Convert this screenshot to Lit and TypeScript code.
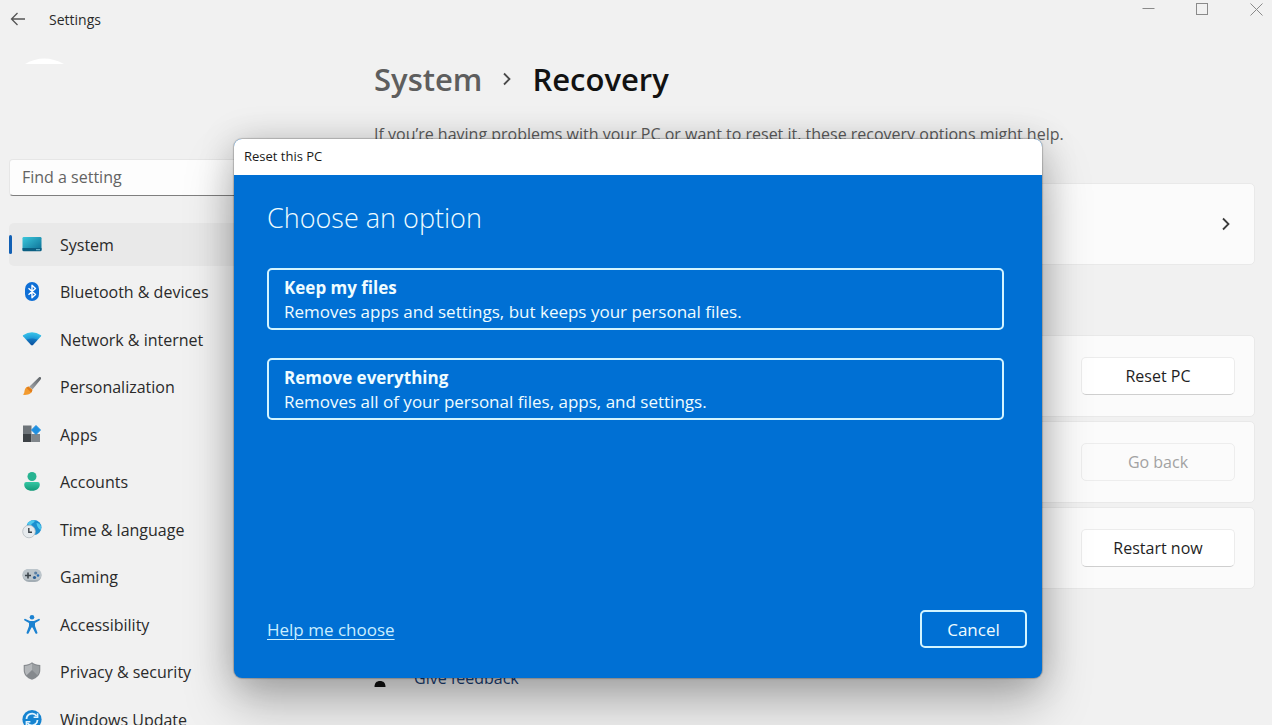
import { LitElement, html, css, svg } from "lit";
import { customElement } from "lit/decorators.js";

const icons: Record<string, unknown> = {
  system: svg`
    <defs><linearGradient id="sy" x1="0" y1="0" x2="1" y2="1"><stop offset="0" stop-color="#3cc8dc"/><stop offset="1" stop-color="#0a6c93"/></linearGradient></defs>
    <rect x="0.5" y="2" width="19" height="14" rx="1.2" fill="url(#sy)"/>
    <path d="M0.5 13h19v2a1.200 1.200 0 0 1-1.200 1.200h-16.600a1.200 1.200 0 0 1-1.200-1.200z" fill="#0b5f82"/>
    <path d="M14 14.700h4" stroke="#8fd3e6" stroke-width="0.800"/>`,
  bluetooth: svg`
    <rect x="3" y="0" width="14" height="19" rx="7" fill="#0f6fd6"/>
    <path d="M6.500 6.300l7 6.200-3.500 3.200V3.300l3.500 3.200-7 6.200" fill="none" stroke="#fff" stroke-width="1.400" stroke-linejoin="round"/>`,
  network: svg`
    <defs><radialGradient id="nw" cx="0.5" cy="1" r="1"><stop offset="0" stop-color="#0b4f9c"/><stop offset="0.5" stop-color="#1377c0"/><stop offset="0.550" stop-color="#1f9ad8"/><stop offset="1" stop-color="#3cc6ea"/></radialGradient></defs>
    <path d="M1 5.300Q10 -1 19 5.300Q19.400 5.800 19 6.300L11 15Q10 15.900 9 15L1 6.300Q0.600 5.800 1 5.300z" fill="url(#nw)"/>`,
  personalization: svg`
    <defs><linearGradient id="pe" x1="1" y1="0" x2="0" y2="1"><stop offset="0" stop-color="#5c6166"/><stop offset="1" stop-color="#a5a9ad"/></linearGradient></defs>
    <path d="M18.600 0.200c0.700 0.500 0.500 1.500 0 2.200L10.500 12.500 7.200 9.700 16.800 0.400c0.600-0.500 1.300-0.600 1.800-0.200z" fill="url(#pe)"/>
    <path d="M6.800 9.600l3.500 3c0.300 3.300-3.300 5.900-9.600 5.200 2.200-1.300 1.300-3.300 2.400-5.700 0.800-1.700 2.300-2.600 3.700-2.500z" fill="#f29a2e"/>
    <path d="M6.200 9.700l4.100 3.400c-0.100 1-0.500 1.800-1.100 2.500L4.300 10.700z" fill="#e07c1c"/>`,
  apps: svg`
    <rect x="1" y="0.500" width="8.500" height="8.500" fill="#6e7479"/>
    <rect x="1" y="9" width="8.500" height="8" fill="#3d4246"/>
    <rect x="9.500" y="9" width="8.500" height="8" fill="#80868b"/>
    <path d="M14 0.500l4.500 4.500-4.500 4.500-4.500-4.500z" fill="#1f8fe0" stroke="#1f8fe0" stroke-linejoin="round"/>`,
  accounts: svg`
    <defs><linearGradient id="ac" x1="0" y1="0" x2="0" y2="1"><stop offset="0" stop-color="#36c7a4"/><stop offset="1" stop-color="#139a78"/></linearGradient></defs>
    <circle cx="10" cy="4.500" r="4.500" fill="#27b391"/>
    <path d="M4.400 10h11.200a2.200 2.200 0 0 1 2.200 2.200c0 4-3 6.500-7.800 6.500s-7.800-2.500-7.800-6.500a2.200 2.200 0 0 1 2.200-2.200z" fill="url(#ac)"/>`,
  time: svg`
    <circle cx="12" cy="7.500" r="7.500" fill="#1c8fd0"/>
    <path d="M5 4a8 8 0 0 1 8-3.500c-1 3-3.500 2.500-4 5zM14.500 3c2 0 3.500 1.200 4.400 3v4c-1.900-0.500-4-3-4.400-7z" fill="#4fc9ee"/>
    <circle cx="7" cy="11.500" r="6.300" fill="#e6eaed" stroke="#b5bcc2" stroke-width="0.800"/>
    <path d="M6.800 8v4.200h3.200" fill="none" stroke="#3a4147" stroke-width="1.400"/>`,
  gaming: svg`
    <rect x="0.500" y="2" width="19" height="13" rx="6.500" fill="#a3adb4"/>
    <rect x="0.500" y="2" width="19" height="11" rx="5.500" fill="#bcc5cb"/>
    <path d="M6 5.500v6M3 8.500h6" stroke="#3c454c" stroke-width="1.600"/>
    <circle cx="13.700" cy="6" r="1.600" fill="#5a7fa3"/><circle cx="16" cy="8.500" r="1.300" fill="#2a6fb5"/><circle cx="12.500" cy="10.500" r="1.600" fill="#2c5f93"/>`,
  accessibility: svg`
    <circle cx="10" cy="2.300" r="2.300" fill="#1b82d1"/>
    <path d="M3.400 3.900L8 5.900h4l4.600-2c1.200-0.400 1.800 1.100 0.800 1.700L13 8v3l2.400 6.400c0.400 1.400-1.400 2-2 0.800L10.500 12.500h-1l-2.900 5.700c-0.600 1.200-2.400 0.600-2-0.800L7 11V8L2.600 5.600c-1-0.600-0.400-2.100 0.800-1.700z" fill="#1b82d1"/>`,
  privacy: svg`
    <path d="M10 0.200c2.400 1.800 5 2.600 8.300 2.700v5.100c0 4.600-3 8-8.300 9.800-5.300-1.800-8.300-5.200-8.300-9.800V2.900C5 2.800 7.600 2 10 0.200z" fill="#85898d"/>
    <path d="M10 1.600c-2.200 1.500-4.400 2.200-7.200 2.400V8c0 2 0.600 3.800 1.800 5.200L10 8z" fill="#b4b7ba"/>
    <path d="M10 1.600c2.200 1.500 4.400 2.200 7.200 2.400V8c0 2-0.600 3.800-1.800 5.200L10 8z" fill="#9b9fa2"/>`,
  update: svg`
    <circle cx="10" cy="9.600" r="9.600" fill="#1583d0"/>
    <path d="M4.500 9A5.600 5.600 0 0 1 14.600 6M15.500 10A5.600 5.600 0 0 1 5.400 13" fill="none" stroke="#dff3ff" stroke-width="1.800"/>
    <path d="M15.600 3.300v4h-4M4.400 15.700v-4h4" fill="none" stroke="#dff3ff" stroke-width="1.600"/>`,
};

const sections = [
  { icon: "system", label: "System" },
  { icon: "bluetooth", label: "Bluetooth & devices" },
  { icon: "network", label: "Network & internet" },
  { icon: "personalization", label: "Personalization" },
  { icon: "apps", label: "Apps" },
  { icon: "accounts", label: "Accounts" },
  { icon: "time", label: "Time & language" },
  { icon: "gaming", label: "Gaming" },
  { icon: "accessibility", label: "Accessibility" },
  { icon: "privacy", label: "Privacy & security" },
  { icon: "update", label: "Windows Update" },
];

@customElement("settings-sidebar")
class SettingsSidebar extends LitElement {
  static styles = css`
    :host { display: block; padding-left: 9px; }
    * { box-sizing: border-box; }
    .profile { height: 119px; padding: 18px 0 0 16px; }
    .avatar { display: block; }
    .search {
      display: block; width: 100%; height: 37px; padding: 0 12px 2px;
      border: 1px solid #e6e6e6; border-bottom-color: #7f7f7f; border-radius: 4px;
      background: #fdfdfd; color: #1b1b1b; font: inherit; outline: none;
    }
    .search::placeholder { color: #636363; opacity: 1; }
    .nav { display: flex; flex-direction: column; justify-content: space-between; min-height: 518px; margin-top: 27px; }
    .item {
      display: flex; align-items: center; gap: 18px; height: 43px; padding-right: 12px;
      border-radius: 5px; color: #2a2a2a; text-decoration: none; white-space: nowrap;
    }
    .item::before { content: ""; width: 3px; height: 19px; margin-right: -8px; border-radius: 2px; }
    .item.active { background: #e9e9e9; }
    .item.active::before { background: #1260b4; }
    .glyph { width: 20px; height: 20px; flex: none; }
  `;
  render() {
    return html`
      <div class="profile">
        <svg class="avatar" width="40" height="6" viewBox="0 0 40 6" aria-hidden="true"><path d="M0 6Q19-5 39 6z" fill="#fff"/></svg>
      </div>
      <input class="search" type="search" placeholder="Find a setting" aria-label="Find a setting" />
      <nav class="nav">
        ${sections.map(
          (s, i) => html`<a class="item ${i === 0 ? "active" : ""}" href="#${s.icon}">
            <svg class="glyph" viewBox="0 0 20 20" aria-hidden="true">${icons[s.icon]}</svg>
            <span>${s.label}</span>
          </a>`
        )}
      </nav>
    `;
  }
}

@customElement("recovery-page")
class RecoveryPage extends LitElement {
  static styles = css`
    :host { display: block; min-width: 0; }
    * { box-sizing: border-box; }
    .crumbs { display: flex; align-items: center; margin: 16px 0 0; font-size: 31px; line-height: 46px; font-weight: 600; color: #121212; }
    .parent { color: #5e5e5e; text-decoration: none; }
    .sep { margin: 0 19px; }
    .intro { margin: 20px 0 0; line-height: 24px; color: #5a5a5a; white-space: nowrap; }
    .card {
      display: flex; align-items: center; justify-content: flex-end; height: 82px; padding: 0 19px;
      background: #fbfbfb; border: 1px solid #e9e9e9; border-radius: 5px;
    }
    .more { display: flex; width: 100%; margin-top: 37px; padding-right: 23px; font: inherit; }
    .options { display: flex; flex-direction: column; gap: 4px; margin-top: 70px; }
    .action {
      width: 154px; height: 38px; font: inherit; color: #1f1f1f; background: #fff;
      border: 1px solid #ececec; border-bottom-color: #cfcfcf; border-radius: 5px;
    }
    .action:disabled { color: #a2a2a2; background: #fbfbfb; border-color: #ededed; }
    .feedback { display: inline-flex; align-items: center; gap: 28px; margin-top: 77px; line-height: 24px; color: #1c3f74; text-decoration: none; }
  `;
  render() {
    return html`
      <h1 class="crumbs">
        <a class="parent" href="#system">System</a>
        <svg class="sep" width="12" height="14" viewBox="0 0 12 14" aria-hidden="true"><path d="M3 1.500L8.500 7 3 12.500" fill="none" stroke="#4a4a4a" stroke-width="1.800"/></svg>
        <span>Recovery</span>
      </h1>
      <p class="intro">If you’re having problems with your PC or want to reset it, these recovery options might help.</p>
      <button class="card more" aria-label="Fix problems">
        <svg width="10" height="14" viewBox="0 0 10 14" aria-hidden="true"><path d="M2 1.500L7.500 7 2 12.500" fill="none" stroke="#3c3c3c" stroke-width="1.800"/></svg>
      </button>
      <div class="options">
        <div class="card"><button class="action">Reset PC</button></div>
        <div class="card"><button class="action" disabled>Go back</button></div>
        <div class="card"><button class="action">Restart now</button></div>
      </div>
      <a class="feedback" href="#feedback">
        <svg width="12" height="20" viewBox="0 0 12 20" aria-hidden="true"><path d="M0.500 19c0-4 2-6 5.500-6s5.500 2 5.500 6z" fill="#111"/></svg>
        Give feedback
      </a>
    `;
  }
}

@customElement("reset-dialog")
class ResetDialog extends LitElement {
  static styles = css`
    :host {
      display: flex; flex-direction: column; width: 808px; min-height: 539px; overflow: hidden;
      border-radius: 8px; background: #0070d4; color: #effcff; font-size: 17px;
      box-shadow: 0 0 1px 1px rgba(0, 0, 0, 0.2), 0 26px 50px rgba(0, 0, 0, 0.26), 0 2px 36px rgba(0, 0, 0, 0.18);
    }
    * { box-sizing: border-box; }
    .bar { height: 36px; padding: 0 10px; background: #fff; color: #1a1a1a; font-size: 13px; line-height: 35px; }
    .body { flex: 1; display: flex; flex-direction: column; padding: 23px 15px 30px 33px; }
    .title { margin: 0 0 30px; font-size: 27px; line-height: 40px; font-weight: 300; }
    .choices { display: flex; flex-direction: column; gap: 28px; padding-right: 23px; }
    .choice {
      display: flex; flex-direction: column; padding: 6px 15px; text-align: left; font: inherit; line-height: 24px;
      color: inherit; background: none; border: 2px solid #d3f4ff; border-radius: 5px; height: 62px;
    }
    .footer { display: flex; align-items: center; justify-content: space-between; margin-top: auto; }
    .help { color: #c9eeff; text-underline-offset: 3px; text-decoration-thickness: 1px; }
    .cancel { width: 107px; height: 38px; font: inherit; color: inherit; background: none; border: 2px solid #d3f4ff; border-radius: 5px; }
  `;
  render() {
    return html`
      <div class="bar">Reset this PC</div>
      <div class="body">
        <h2 class="title">Choose an option</h2>
        <div class="choices">
          <button class="choice"><strong>Keep my files</strong><span>Removes apps and settings, but keeps your personal files.</span></button>
          <button class="choice"><strong>Remove everything</strong><span>Removes all of your personal files, apps, and settings.</span></button>
        </div>
        <div class="footer">
          <a class="help" href="#help">Help me choose</a>
          <button class="cancel">Cancel</button>
        </div>
      </div>
    `;
  }
}

@customElement("app-root")
class AppRoot extends LitElement {
  static styles = css`
    :host {
      display: block; position: relative; height: 100vh; overflow: hidden; background: #f1f1f1;
      font-family: "Open Sans", "Noto Sans", sans-serif; font-size: 16px; color: #1b1b1b;
    }
    * { box-sizing: border-box; }
    .titlebar { display: flex; align-items: flex-start; height: 40px; padding: 0 6px 0 8px; }
    .name { margin-left: 22px; font-size: 14px; line-height: 40px; color: #2a2a2a; }
    .icon { display: flex; align-items: center; justify-content: center; padding: 0; border: 0; background: none; }
    .back { width: 19px; height: 38px; }
    .controls { display: flex; gap: 34px; margin-left: auto; }
    .ctl { width: 20px; height: 19px; }
    .layout { display: grid; grid-template-columns: 338px minmax(0, 1fr); column-gap: 36px; padding-right: 17px; }
    .overlay { position: absolute; inset: 0; display: flex; justify-content: center; align-items: flex-start; padding: 139px 0 0 4px; }
  `;
  render() {
    return html`
      <header class="titlebar">
        <button class="icon back" aria-label="Back">
          <svg width="16" height="14" viewBox="0 0 16 14"><path d="M15 7H1.500M7.500 1L1.500 7l6 6" fill="none" stroke="#555" stroke-width="1.300"/></svg>
        </button>
        <span class="name">Settings</span>
        <div class="controls">
          <button class="icon ctl" aria-label="Minimize"><svg width="13" height="13" viewBox="0 0 13 13"><path d="M0.500 5.500h12" stroke="#8a8a8a"/></svg></button>
          <button class="icon ctl" aria-label="Maximize"><svg width="13" height="13" viewBox="0 0 13 13"><rect x="0.500" y="0.500" width="11" height="11" fill="none" stroke="#8a8a8a"/></svg></button>
          <button class="icon ctl" aria-label="Close"><svg width="13" height="13" viewBox="0 0 13 13"><path d="M0.500 0.500l12 12M12.500 0.500l-12 12" stroke="#8a8a8a" fill="none"/></svg></button>
        </div>
      </header>
      <div class="layout">
        <settings-sidebar></settings-sidebar>
        <recovery-page></recovery-page>
      </div>
      <div class="overlay"><reset-dialog role="dialog" aria-label="Reset this PC"></reset-dialog></div>
    `;
  }
}
